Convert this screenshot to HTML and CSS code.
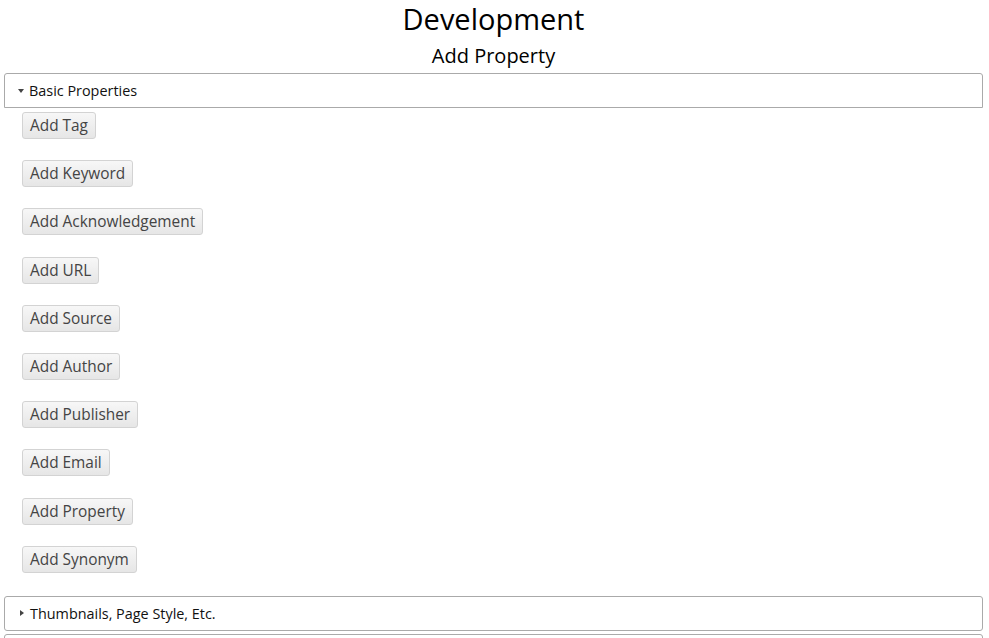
FILE: index.html
```html
<!DOCTYPE html>
<html>
<head>
<meta charset="utf-8">
<link rel="stylesheet" href="styles.css">
</head>
<body>
<h1 class="title">Development</h1>
<h2 class="subtitle">Add Property</h2>
<div class="accordion">
  <div class="acc-header open"><span class="tri tri-down"></span>Basic Properties</div>
  <div class="acc-content">
    <div class="row"><button class="btn">Add Tag</button></div>
    <div class="row"><button class="btn">Add Keyword</button></div>
    <div class="row"><button class="btn">Add Acknowledgement</button></div>
    <div class="row"><button class="btn">Add URL</button></div>
    <div class="row"><button class="btn">Add Source</button></div>
    <div class="row"><button class="btn">Add Author</button></div>
    <div class="row"><button class="btn">Add Publisher</button></div>
    <div class="row"><button class="btn">Add Email</button></div>
    <div class="row"><button class="btn">Add Property</button></div>
    <div class="row"><button class="btn">Add Synonym</button></div>
  </div>
  <div class="acc-header closed"><span class="tri tri-right"></span>Thumbnails, Page Style, Etc.</div>
  <div class="acc-header closed"></div>
</div>
</body>
</html>
```
FILE: styles.css
```css
html, body {
  margin: 0;
  padding: 0;
  background: #fff;
}
body {
  padding: 0 6px 0 4px;
  font-family: "Open Sans", "DejaVu Sans", sans-serif;
  color: #000;
}
.title {
  margin: 0;
  padding-top: 1px;
  font-size: 29px;
  font-weight: normal;
  line-height: 35px;
  text-align: center;
}
.subtitle {
  margin: 0;
  padding-top: 3px;
  font-size: 20px;
  font-weight: normal;
  line-height: 34px;
  text-align: center;
}
.accordion {
  display: flex;
  flex-direction: column;
}
.acc-header {
  display: flex;
  align-items: center;
  height: 33px;
  flex: none;
  padding-left: 13px;
  border: 1px solid #aaa;
  font-size: 14.4px;
  color: #111;
}
.acc-header.open {
  border-radius: 3px 3px 0 0;
}
.acc-header.closed {
  border-radius: 3px;
  margin-bottom: 3px;
}
.tri {
  display: inline-block;
  width: 0;
  height: 0;
}
.tri-down {
  border-left: 3.5px solid transparent;
  border-right: 3.5px solid transparent;
  border-top: 4px solid #444;
  margin-right: 5px;
}
.tri-right {
  border-top: 3.5px solid transparent;
  border-bottom: 3.5px solid transparent;
  border-left: 4px solid #444;
  margin-left: 2px;
  margin-right: 6px;
}
.acc-content {
  display: flex;
  flex-direction: column;
  gap: 21.2px;
  padding: 4px 0 23px 18px;
}
.row {
  display: flex;
}
.btn {
  height: 27px;
  padding: 0 7px;
  border: 1px solid #d3d3d3;
  border-radius: 3px;
  background: linear-gradient(#f7f7f7, #e6e6e6);
  font-family: "Open Sans", "DejaVu Sans", sans-serif;
  font-size: 15.4px;
  color: #444;
  line-height: 25px;
}
```
